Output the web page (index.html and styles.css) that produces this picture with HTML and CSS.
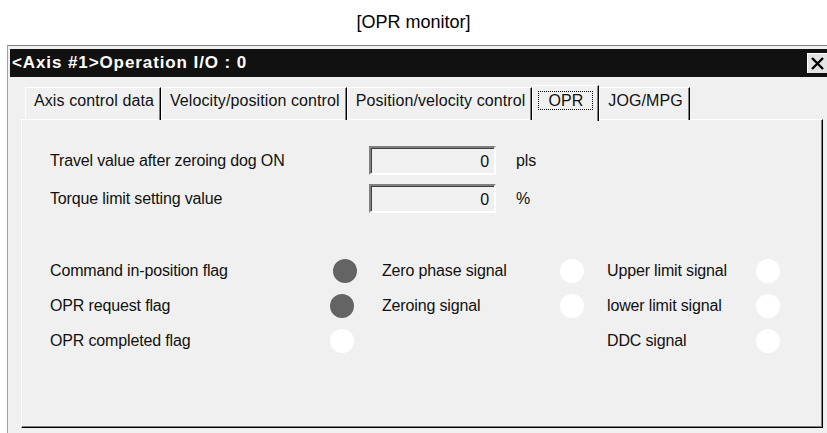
FILE: index.html
```html
<!DOCTYPE html>
<html>
<head>
	<meta charset="utf-8">
	<title>OPR monitor</title>
	<link rel="stylesheet" href="styles.css">
</head>
<body>
	<div class="caption">[OPR monitor]</div>

	<div class="window">
		<div class="titlebar">
			<span class="title">&lt;Axis #1&gt;Operation I/O : 0</span>
			<div class="close">
				<svg width="13" height="13" viewBox="0 0 13 13">
					<path d="M1 1 L12 12 M12 1 L1 12" stroke="#000" stroke-width="2.4" fill="none"/>
				</svg>
			</div>
		</div>

		<div class="client">
			<div class="tabs">
				<div class="tab">Axis control data</div>
				<div class="tab">Velocity/position control</div>
				<div class="tab">Position/velocity control</div>
				<div class="tab active"><span class="focus">OPR</span></div>
				<div class="tab">JOG/MPG</div>
			</div>

			<div class="panel">
				<div class="fields">
					<label>Travel value after zeroing dog ON</label>
					<div class="readout">0</div>
					<span class="unit">pls</span>

					<label>Torque limit setting value</label>
					<div class="readout">0</div>
					<span class="unit">%</span>
				</div>

				<div class="signals">
					<label>Command in-position flag</label>
					<div class="led on first"></div>
					<label>Zero phase signal</label>
					<div class="led"></div>
					<label>Upper limit signal</label>
					<div class="led"></div>

					<label>OPR request flag</label>
					<div class="led on"></div>
					<label>Zeroing signal</label>
					<div class="led"></div>
					<label>lower limit signal</label>
					<div class="led"></div>

					<label>OPR completed flag</label>
					<div class="led"></div>
					<span></span>
					<span></span>
					<label>DDC signal</label>
					<div class="led"></div>
				</div>
			</div>
		</div>
	</div>
</body>
</html>
```

FILE: styles.css
```css
body {
	margin: 0;
	background: #fff;
	font: 16px "Liberation Sans", Arial, sans-serif;
	letter-spacing: -0.15px;
	color: #111;
	overflow: hidden;
}
.caption {
	height: 45px;
	line-height: 44px;
	text-align: center;
	font-size: 18px;
	letter-spacing: 0;
	color: #000;
}
.window {
	margin-left: 7px;
	border-top: 1px solid #808080;
	border-left: 1px solid #a0a0a0;
	background: #f0f0f0;
	padding: 3px 0 0 2px;
	height: 400px;
}
.titlebar {
	height: 28px;
	background: #111;
	display: flex;
	align-items: center;
	justify-content: space-between;
}
.title {
	color: #fff;
	font: bold 17px "Liberation Sans", Arial, sans-serif;
	letter-spacing: 0.9px;
	padding-left: 2px;
}
.close {
	width: 20px;
	height: 20px;
	box-sizing: border-box;
	background: #e4e4e4;
	border-top: 1px solid #fff;
	border-left: 1px solid #fff;
	display: flex;
	align-items: center;
	justify-content: center;
}
.client {
	margin-left: -2px;
	padding: 8px 4px 0 13px;
}
.tabs {
	display: flex;
	height: 34px;
	padding-left: 4px;
	position: relative;
	z-index: 1;
}
.tab {
	height: 33px;
	line-height: 26px;
	padding: 0 6px 0 8px;
	border-left: 1px solid #fff;
	border-top: 1px solid #fff;
	border-right: 1px solid #000;
	box-shadow: inset -1px 0 #808080;
	font-size: 16px;
	letter-spacing: 0.1px;
	box-sizing: border-box;
	margin-top: 2px;
}
.tab.active {
	margin-top: 0;
	height: 36px;
	background: #f0f0f0;
	padding: 2px 5px 0;
}
.focus {
	display: inline-block;
	border: 1px dotted #000;
	line-height: 17px;
	padding: 0 9px;
}
.panel {
	height: 309px;
	box-sizing: border-box;
	border-top: 1px solid #fff;
	border-left: 1px solid #fff;
	border-right: 1px solid #000;
	border-bottom: 1px solid #000;
	box-shadow: inset -1px -1px #808080;
}
.fields {
	display: grid;
	grid-template-columns: 299px 127px auto;
	column-gap: 20px;
	row-gap: 9px;
	align-items: center;
	padding: 26px 0 0 28px;
}
.readout {
	height: 29px;
	box-sizing: border-box;
	border-top: 2px solid #808080;
	border-left: 2px solid #808080;
	border-bottom: 2px solid #fff;
	border-right: 2px solid #fff;
	box-shadow: inset 1px 1px #404040;
	text-align: right;
	padding-right: 5px;
	line-height: 27px;
}
.signals {
	display: grid;
	grid-template-columns: 280px 52px 178px 47px 149px 24px;
	grid-auto-rows: 35px;
	align-items: center;
	margin-top: 40px;
	padding-left: 28px;
}
.led {
	width: 24px;
	height: 24px;
	border-radius: 50%;
	background: #fff;
}
.led.on {
	background: #646464;
}
.led.first {
	margin-left: 3px;
}
```
